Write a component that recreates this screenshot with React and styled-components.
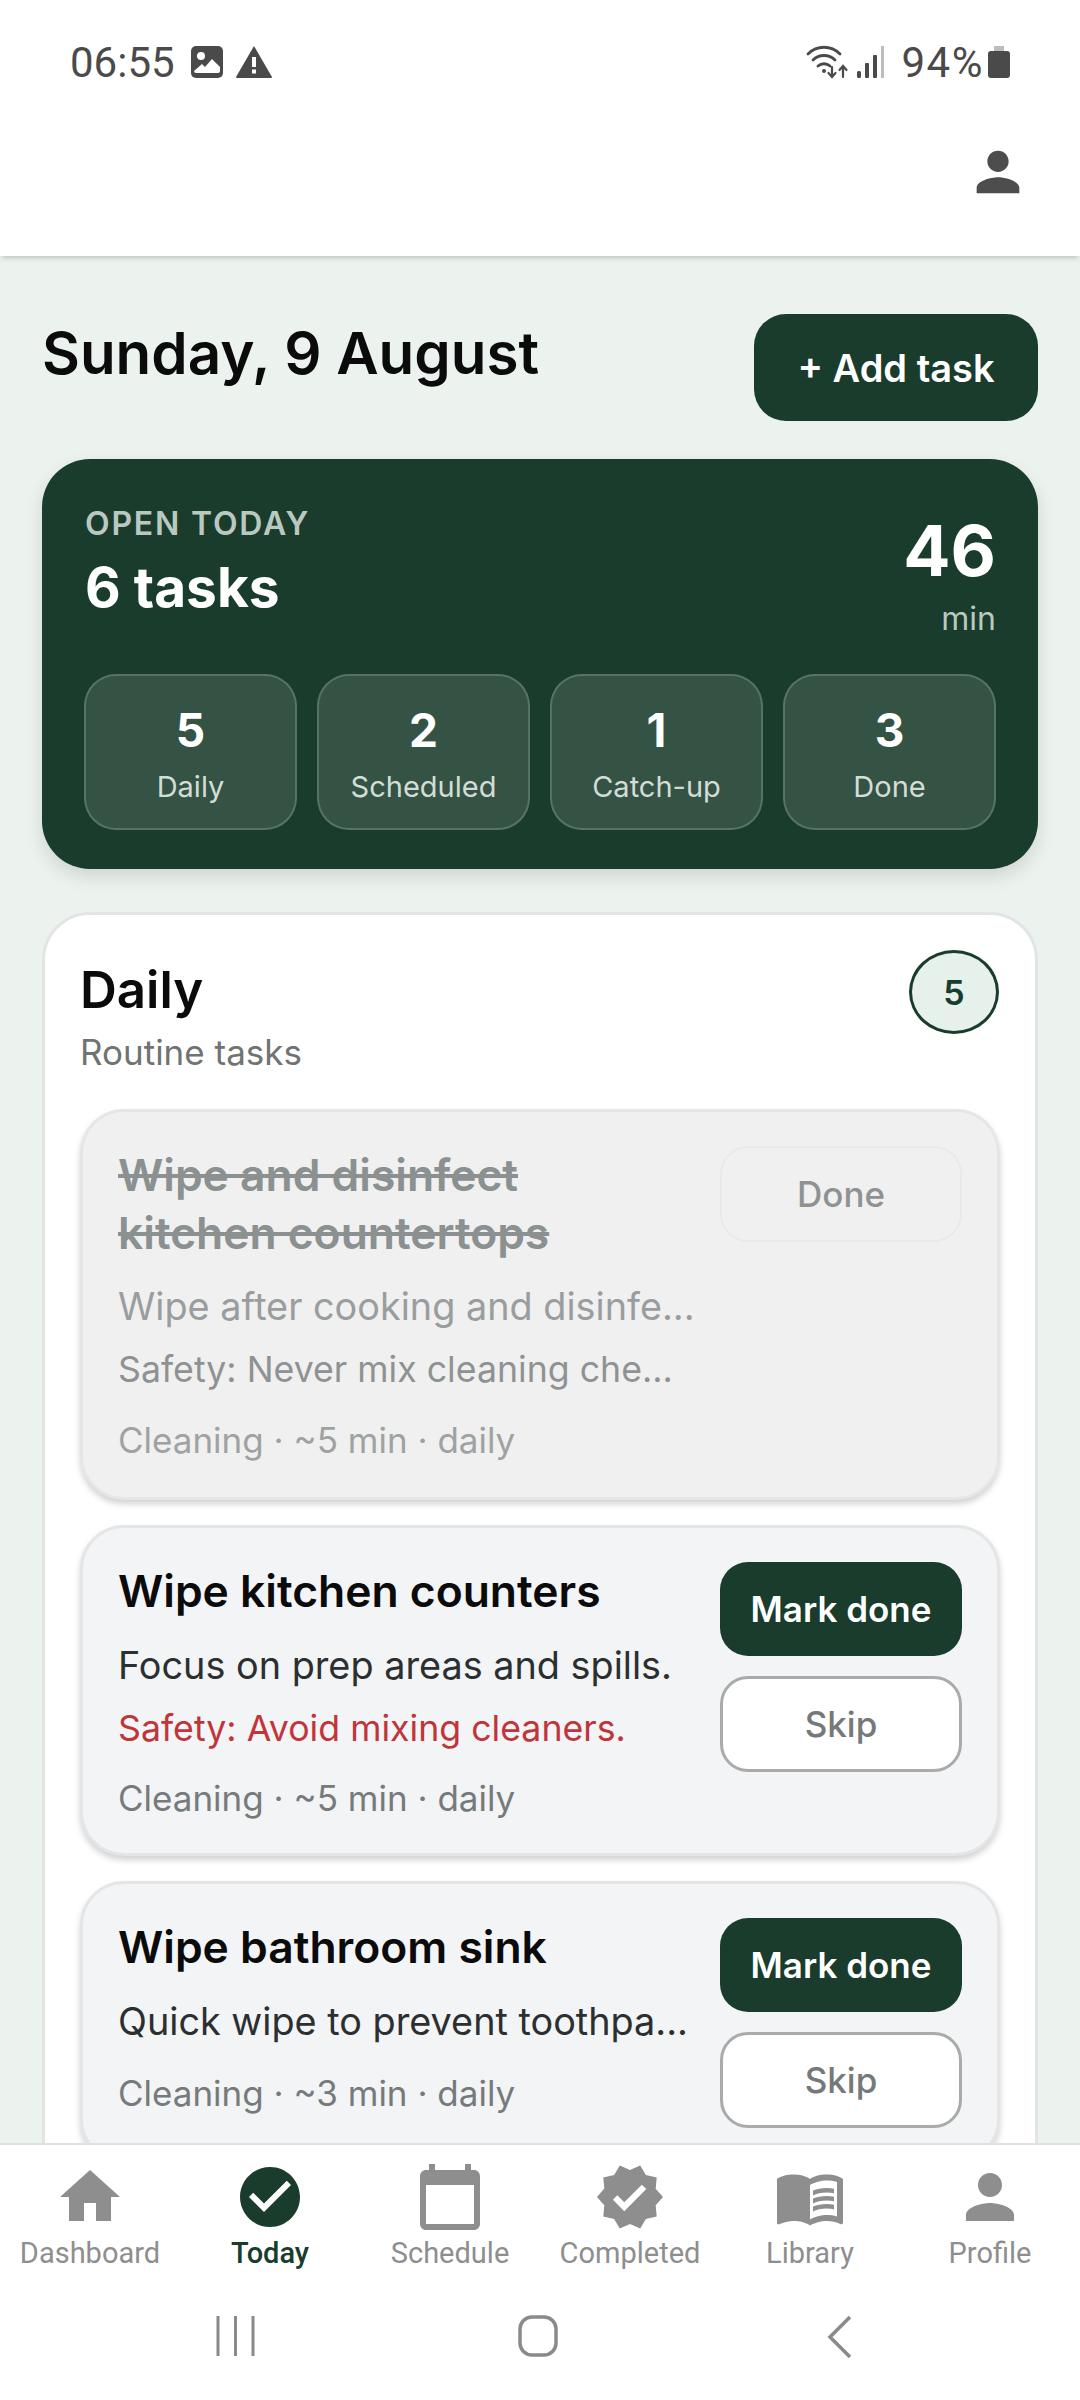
import styled, { createGlobalStyle } from "styled-components";
import {
  MdHome,
  MdCheckCircle,
  MdCalendarToday,
  MdVerified,
  MdMenuBook,
  MdPerson,
} from "react-icons/md";

const GlobalStyle = createGlobalStyle`
  html, body {
    margin: 0;
    padding: 0;
    background: #ffffff;
  }
  * {
    box-sizing: border-box;
  }
`;

const Screen = styled.div`
  width: 1080px;
  height: 2400px;
  display: flex;
  flex-direction: column;
  overflow: hidden;
  background: #ffffff;
  font-family: Inter, "Liberation Sans", sans-serif;
`;

const StatusBar = styled.div`
  height: 124px;
  flex: none;
  display: flex;
  align-items: center;
  justify-content: space-between;
  padding: 0 70px;
  color: #4a4a4a;
  font-family: Roboto, sans-serif;
  font-size: 42px;
`;

const StatusGroup = styled.div`
  display: flex;
  align-items: center;
  gap: ${(p) => p.$gap || 12}px;
`;

const TimeText = styled.span`
  margin-right: 3px;
`;

const BatteryText = styled.span`
  margin: 0 -2px 0 10px;
  letter-spacing: 1.5px;
`;

const TopBar = styled.header`
  height: 132px;
  flex: none;
  display: flex;
  justify-content: flex-end;
  padding: 16px 50px 0 0;
  background: #ffffff;
  color: #4d4d4d;
  position: relative;
  z-index: 1;
  box-shadow: 0 4px 5px -2px rgba(0, 0, 0, 0.2);
`;

const Main = styled.main`
  flex: 1;
  min-height: 0;
  overflow: hidden;
  padding: 58px 42px 0;
  background: #ecf3ef;
`;

const HeadRow = styled.div`
  display: flex;
  justify-content: space-between;
  align-items: flex-start;
`;

const DateTitle = styled.h1`
  margin: 0;
  padding-top: 3px;
  font-size: 58.3px;
  line-height: 72px;
  font-weight: 600;
  color: #0b0b0b;
`;

const AddButton = styled.button`
  width: 284px;
  height: 107px;
  border: 0;
  border-radius: 32px;
  background: #193c2c;
  color: #ffffff;
  font-family: inherit;
  font-size: 38px;
  font-weight: 600;
`;

const Hero = styled.section`
  margin-top: 38px;
  height: 410px;
  padding: 45px 42px 42px;
  border-radius: 48px;
  background: #193c2c;
  box-shadow: 0 8px 18px rgba(0, 0, 0, 0.12);
`;

const HeroTop = styled.div`
  display: flex;
  justify-content: space-between;
  height: 170px;
`;

const Eyebrow = styled.div`
  padding-left: 1px;
  font-size: 32px;
  line-height: 40px;
  font-weight: 600;
  letter-spacing: 1.8px;
  color: #b9c9c0;
`;

const HeroCount = styled.div`
  margin-top: 10px;
  padding-left: 1px;
  font-size: 55px;
  line-height: 66px;
  font-weight: 700;
  color: #ffffff;
`;

const HeroMinutes = styled.div`
  text-align: right;
`;

const MinutesValue = styled.div`
  margin-top: 5px;
  font-size: 70px;
  line-height: 84px;
  font-weight: 700;
  color: #ffffff;
`;

const MinutesUnit = styled.div`
  margin-top: 6px;
  font-size: 32px;
  line-height: 40px;
  color: #b9c9c0;
`;

const StatGrid = styled.div`
  display: grid;
  grid-template-columns: repeat(4, 1fr);
  gap: 20px;
`;

const StatTile = styled.div`
  height: 156px;
  display: flex;
  flex-direction: column;
  align-items: center;
  padding-top: 28px;
  border: 2px solid rgba(255, 255, 255, 0.18);
  border-radius: 32px;
  background: rgba(255, 255, 255, 0.12);
`;

const StatValue = styled.div`
  font-size: 46px;
  line-height: 52px;
  font-weight: 700;
  color: #ffffff;
`;

const StatLabel = styled.div`
  margin-top: 11px;
  font-size: 29px;
  line-height: 40px;
  color: #d3ddd7;
`;

const SectionCard = styled.section`
  margin-top: 43px;
  padding: 35px;
  border: 3px solid #e2e5e3;
  border-radius: 48px;
  background: #ffffff;
`;

const SectionHead = styled.div`
  display: flex;
  justify-content: space-between;
  align-items: flex-start;
  margin-bottom: 36px;
`;

const SectionTitle = styled.h2`
  margin: 0;
  padding-top: 9px;
  font-size: 51px;
  line-height: 62px;
  font-weight: 600;
  color: #0b0b0b;
`;

const SectionSub = styled.div`
  margin-top: 10px;
  font-size: 35px;
  line-height: 42px;
  color: #6f7372;
`;

const CountBadge = styled.div`
  width: 90px;
  height: 84px;
  margin-right: 1px;
  display: flex;
  align-items: center;
  justify-content: center;
  border: 3px solid #193c2c;
  border-radius: 50%;
  background: #e6f1ec;
  color: #193c2c;
  font-size: 34px;
  font-weight: 600;
`;

const TaskList = styled.div`
  display: flex;
  flex-direction: column;
  gap: 25px;
`;

const TaskCard = styled.article`
  display: flex;
  justify-content: space-between;
  gap: 20px;
  padding: 34px 35px ${(p) => (p.$done ? 34 : 32)}px;
  border: 3px solid ${(p) => (p.$done ? "#e6e6e6" : "#e3e5e7")};
  border-radius: 44px;
  background: ${(p) => (p.$done ? "#f0f0f0" : "#f2f4f6")};
  box-shadow: 0 4px 6px rgba(0, 0, 0, 0.18);
`;

const TaskBody = styled.div`
  min-width: 0;
  flex: 1;
`;

const TaskTitle = styled.h3`
  margin: 0;
  font-size: 44.4px;
  line-height: 58px;
  font-weight: 600;
  color: ${(p) => (p.$done ? "#8a9190" : "#0b0b0b")};
  text-decoration: ${(p) => (p.$done ? "line-through" : "none")};
`;

const TaskDesc = styled.div`
  margin-top: ${(p) => (p.$done ? 19 : 20)}px;
  font-size: 37.8px;
  line-height: 50px;
  white-space: nowrap;
  color: ${(p) => (p.$done ? "#9a9d9d" : "#2c2f30")};
`;

const TaskSafety = styled.div`
  margin-top: 15px;
  font-size: 35.7px;
  line-height: 46px;
  white-space: nowrap;
  color: ${(p) => (p.$done ? "#8f9292" : "#c0343a")};
`;

const TaskMeta = styled.div`
  margin-top: ${(p) => (p.$done ? 25 : 24)}px;
  font-size: 35px;
  line-height: 46px;
  white-space: nowrap;
  color: ${(p) => (p.$done ? "#9fa2a2" : "#767a7b")};
`;

const TaskActions = styled.div`
  flex: none;
  width: 242px;
  display: flex;
  flex-direction: column;
  gap: 20px;
`;

const ActionButton = styled.button`
  width: 100%;
  height: ${(p) => (p.$kind === "primary" ? 94 : 96)}px;
  border-radius: 28px;
  font-family: inherit;
  font-size: 35px;
  font-weight: ${(p) => (p.$kind === "primary" ? 600 : 500)};
  border: ${(p) =>
    p.$kind === "primary"
      ? "0"
      : p.$kind === "done"
        ? "2px solid #e9e9e9"
        : "3px solid #a9abab"};
  background: ${(p) =>
    p.$kind === "primary"
      ? "#193c2c"
      : p.$kind === "done"
        ? "#f0f0f0"
        : "#ffffff"};
  color: ${(p) =>
    p.$kind === "primary"
      ? "#ffffff"
      : p.$kind === "done"
        ? "#8f9292"
        : "#757979"};
`;

const BottomNav = styled.nav`
  flex: none;
  height: 129px;
  display: grid;
  grid-template-columns: repeat(6, 1fr);
  padding-top: 16px;
  border-top: 2px solid #dfe2e1;
  background: #ffffff;
  position: relative;
`;

const NavItem = styled.div`
  display: flex;
  flex-direction: column;
  align-items: center;
  color: ${(p) => (p.$active ? "#193c2c" : "#8e8e8e")};
`;

const NavLabel = styled.span`
  margin-top: 3px;
  font-family: Roboto, sans-serif;
  font-size: 29px;
  line-height: 34px;
  font-weight: ${(p) => (p.$active ? 500 : 400)};
  white-space: nowrap;
`;

const SystemNav = styled.div`
  flex: none;
  height: 128px;
  display: flex;
  justify-content: center;
  align-items: flex-start;
  gap: 262px;
  padding: 43px 4px 0 0;
  background: #ffffff;
  color: #8a8a8a;
`;

const tasks = [
  {
    title: "Wipe kitchen counters",
    desc: "Focus on prep areas and spills.",
    safety: "Safety: Avoid mixing cleaners.",
    meta: "Cleaning · ~5 min · daily",
  },
  {
    title: "Wipe bathroom sink",
    desc: "Quick wipe to prevent toothpa...",
    meta: "Cleaning · ~3 min · daily",
  },
];

const stats = [
  { value: 5, label: "Daily" },
  { value: 2, label: "Scheduled" },
  { value: 1, label: "Catch-up" },
  { value: 3, label: "Done" },
];

const navItems = [
  { label: "Dashboard", Icon: MdHome },
  { label: "Today", Icon: MdCheckCircle, active: true },
  { label: "Schedule", Icon: MdCalendarToday },
  { label: "Completed", Icon: MdVerified },
  { label: "Library", Icon: MdMenuBook },
  { label: "Profile", Icon: MdPerson },
];

function ImageIcon() {
  return (
    <svg width="32" height="32" viewBox="0 0 32 32">
      <rect width="32" height="32" rx="5" fill="#4a4a4a" />
      <circle cx="10" cy="10" r="4" fill="#fff" />
      <path
        d="M3 25l8-7 3 3 7-8 8 8v4a2 2 0 0 1-2 2H5a2 2 0 0 1-2-2z"
        fill="#fff"
      />
    </svg>
  );
}

function WarningIcon() {
  return (
    <svg width="36" height="32" viewBox="0 0 36 32">
      <path d="M18 0l18 31a1 1 0 0 1-1 1H1a1 1 0 0 1-1-1z" fill="#4a4a4a" />
      <rect x="16" y="11" width="4" height="10" fill="#fff" />
      <rect x="16" y="23.5" width="4" height="4" fill="#fff" />
    </svg>
  );
}

function WifiIcon() {
  return (
    <svg width="44" height="34" viewBox="0 0 44 34" fill="none">
      <g stroke="#4a4a4a" strokeWidth="2.8" strokeLinecap="round">
        <path d="M2 9C11 0 25 0 34 9" />
        <path d="M7 15c6-6 16-6 22 0" />
        <path d="M12 21c3.500-3 8.500-3 12 0" />
        <path d="M26 22v10M22.500 28l3.500 4 3.500-4" strokeWidth="2.200" />
        <path d="M37 32V21M33.500 25l3.500-4 3.500 4" strokeWidth="2.200" />
      </g>
      <circle cx="18" cy="26" r="2" fill="#4a4a4a" />
    </svg>
  );
}

function SignalIcon() {
  return (
    <svg width="30" height="32" viewBox="0 0 30 32">
      <rect x="1" y="25" width="4" height="7" rx="1.500" fill="#4a4a4a" />
      <rect x="9" y="17" width="4" height="15" rx="1" fill="#4a4a4a" />
      <rect x="17" y="9" width="4" height="23" rx="1" fill="#4a4a4a" />
      <rect x="25" y="0" width="3" height="32" fill="#bdbdbd" />
    </svg>
  );
}

function BatteryIcon() {
  return (
    <svg width="22" height="32" viewBox="0 0 22 32">
      <rect x="6" y="0" width="10" height="5" fill="#bdbdbd" />
      <rect y="5" width="22" height="27" rx="3" fill="#4a4a4a" />
    </svg>
  );
}

function RecentsIcon() {
  return (
    <svg width="40" height="42" viewBox="0 0 40 42" fill="none">
      <path d="M2 1v40M19.500 1v40M37 1v40" stroke="#8a8a8a" strokeWidth="3" />
    </svg>
  );
}

function HomeIcon() {
  return (
    <svg width="40" height="42" viewBox="0 0 40 42" fill="none">
      <rect
        x="2"
        y="2"
        width="36"
        height="38"
        rx="12"
        stroke="#8a8a8a"
        strokeWidth="3.500"
      />
    </svg>
  );
}

function BackIcon() {
  return (
    <svg width="40" height="44" viewBox="0 0 40 44" fill="none">
      <path d="M30 2L10 22l20 20" stroke="#8a8a8a" strokeWidth="3.500" />
    </svg>
  );
}

export default function App() {
  return (
    <>
      <GlobalStyle />
      <Screen>
        <StatusBar>
          <StatusGroup $gap={13}>
            <TimeText>06:55</TimeText>
            <ImageIcon />
            <WarningIcon />
          </StatusGroup>
          <StatusGroup $gap={6}>
            <WifiIcon />
            <SignalIcon />
            <BatteryText>94%</BatteryText>
            <BatteryIcon />
          </StatusGroup>
        </StatusBar>
        <TopBar>
          <MdPerson size={64} />
        </TopBar>
        <Main>
          <HeadRow>
            <DateTitle>Sunday, 9 August</DateTitle>
            <AddButton>+ Add task</AddButton>
          </HeadRow>
          <Hero>
            <HeroTop>
              <div>
                <Eyebrow>OPEN TODAY</Eyebrow>
                <HeroCount>6 tasks</HeroCount>
              </div>
              <HeroMinutes>
                <MinutesValue>46</MinutesValue>
                <MinutesUnit>min</MinutesUnit>
              </HeroMinutes>
            </HeroTop>
            <StatGrid>
              {stats.map((s) => (
                <StatTile key={s.label}>
                  <StatValue>{s.value}</StatValue>
                  <StatLabel>{s.label}</StatLabel>
                </StatTile>
              ))}
            </StatGrid>
          </Hero>
          <SectionCard>
            <SectionHead>
              <div>
                <SectionTitle>Daily</SectionTitle>
                <SectionSub>Routine tasks</SectionSub>
              </div>
              <CountBadge>5</CountBadge>
            </SectionHead>
            <TaskList>
              <TaskCard $done>
                <TaskBody>
                  <TaskTitle $done>
                    Wipe and disinfect
                    <br />
                    kitchen countertops
                  </TaskTitle>
                  <TaskDesc $done>Wipe after cooking and disinfe...</TaskDesc>
                  <TaskSafety $done>Safety: Never mix cleaning che...</TaskSafety>
                  <TaskMeta $done>Cleaning · ~5 min · daily</TaskMeta>
                </TaskBody>
                <TaskActions>
                  <ActionButton $kind="done">Done</ActionButton>
                </TaskActions>
              </TaskCard>
              {tasks.map((t) => (
                <TaskCard key={t.title}>
                  <TaskBody>
                    <TaskTitle>{t.title}</TaskTitle>
                    <TaskDesc>{t.desc}</TaskDesc>
                    {t.safety && <TaskSafety>{t.safety}</TaskSafety>}
                    <TaskMeta>{t.meta}</TaskMeta>
                  </TaskBody>
                  <TaskActions>
                    <ActionButton $kind="primary">Mark done</ActionButton>
                    <ActionButton>Skip</ActionButton>
                  </TaskActions>
                </TaskCard>
              ))}
            </TaskList>
          </SectionCard>
        </Main>
        <BottomNav>
          {navItems.map(({ label, Icon, active }) => (
            <NavItem key={label} $active={active}>
              <Icon size={72} />
              <NavLabel $active={active}>{label}</NavLabel>
            </NavItem>
          ))}
        </BottomNav>
        <SystemNav>
          <RecentsIcon />
          <HomeIcon />
          <BackIcon />
        </SystemNav>
      </Screen>
    </>
  );
}
